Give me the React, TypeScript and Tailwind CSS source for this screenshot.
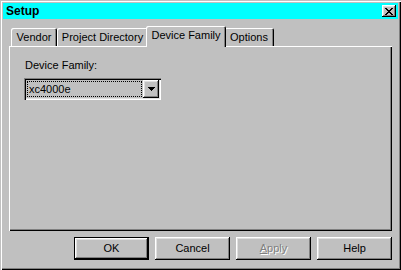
export default function App() {
  const raised =
    "shadow-[inset_-1px_-1px_#000,inset_1px_1px_#fff,inset_-2px_-2px_#808080,inset_2px_2px_#dfdfdf]";
  return (
    <div
      className="w-[401px] h-[270px] bg-[#c0c0c0] p-[3px] flex flex-col text-[11px] text-black shadow-[inset_1px_1px_#c0c0c0,inset_2px_2px_#fff,inset_-1px_-1px_#000,inset_-2px_-2px_#808080]"
      style={{ fontFamily: '"Liberation Sans", Arial, sans-serif' }}
    >
      {/* Title bar */}
      <div className="h-[16px] bg-[#00ffff] flex items-center justify-between pl-[3px] pr-[2px]">
        <span className="font-bold text-[12px] leading-[16px]">Setup</span>
        <div className={`w-[14px] h-[12px] bg-[#c0c0c0] flex items-center justify-center ${raised}`}>
          <svg width="8" height="7" viewBox="0 0 8 7" shapeRendering="crispEdges">
            <path
              d="M0 0h2v1H0zM6 0h2v1H6zM1 1h2v1H1zM5 1h2v1H5zM2 2h4v1H2zM3 3h2v1H3zM2 4h4v1H2zM1 5h2v1H1zM5 5h2v1H5zM0 6h2v1H0zM6 6h2v1H6z"
              fill="#000"
            />
          </svg>
        </div>
      </div>

      {/* Body */}
      <div className="flex-1 flex flex-col px-[6px] pt-[7px]">
        {/* Tabs */}
        <div className="flex items-end h-[20px] pl-[2px]">
          <div className="w-[46px] h-[18px] flex items-center justify-center rounded-tl-[2px] rounded-tr-[2px] shadow-[inset_1px_1px_#fff,inset_-1px_0_#000,inset_-2px_0_#808080]">
            Vendor
          </div>
          <div className="w-[91px] h-[18px] flex items-center justify-center rounded-tl-[2px] rounded-tr-[2px] shadow-[inset_1px_1px_#fff,inset_-1px_0_#000,inset_-2px_0_#808080]">
            Project Directory
          </div>
          <div className="relative z-10 w-[80px] h-[21px] -mx-[2px] -mb-[1px] pb-[2px] bg-[#c0c0c0] flex items-center justify-center rounded-tl-[2px] rounded-tr-[2px] shadow-[inset_1px_1px_#fff,inset_-1px_0_#000,inset_-2px_0_#808080]">
            Device Family
          </div>
          <div className="w-[50px] h-[18px] flex items-center justify-center rounded-tl-[2px] rounded-tr-[2px] shadow-[inset_1px_1px_#fff,inset_-1px_0_#000,inset_-2px_0_#808080]">
            Options
          </div>
        </div>

        {/* Panel */}
        <div className="h-[185px] flex flex-col pl-[15px] pt-[13px] shadow-[inset_1px_1px_#fff,inset_-1px_-1px_#000,inset_-2px_-2px_#808080]">
          <div className="leading-[13px] pl-[1px]">Device Family:</div>
          <div className="mt-[6px] w-[137px] h-[22px] flex p-[2px] shadow-[inset_1px_1px_#808080,inset_2px_2px_#000,inset_-1px_-1px_#fff,inset_-2px_-2px_#dfdfdf]">
            <div className="flex-1 flex items-stretch p-[1px]">
              <div className="flex-1 border border-dotted border-black flex items-center pl-[1px] leading-[13px]">
                xc4000e
              </div>
            </div>
            <div className={`w-[16px] h-full bg-[#c0c0c0] flex items-center justify-center ${raised}`}>
              <svg width="7" height="4" viewBox="0 0 7 4" shapeRendering="crispEdges">
                <path d="M0 0h7v1H0zM1 1h5v1H1zM2 2h3v1H2zM3 3h1v1H3z" fill="#000" />
              </svg>
            </div>
          </div>
        </div>

        {/* Buttons */}
        <div className="mt-[6px] flex justify-end gap-[6px]">
          <div className="w-[75px] h-[23px] border border-black">
            <div className="w-full h-full flex items-center justify-center shadow-[inset_-1px_-1px_#000,inset_1px_1px_#fff,inset_-2px_-2px_#808080,inset_2px_2px_#dfdfdf]">
              OK
            </div>
          </div>
          <div className={`w-[75px] h-[23px] flex items-center justify-center ${raised}`}>Cancel</div>
          <div className={`w-[75px] h-[23px] flex items-center justify-center ${raised}`}>
            <span className="text-[#808080] [text-shadow:1px_1px_0_#fff]">
              <span className="underline">A</span>pply
            </span>
          </div>
          <div className={`w-[75px] h-[23px] flex items-center justify-center ${raised}`}>Help</div>
        </div>
      </div>
    </div>
  );
}
